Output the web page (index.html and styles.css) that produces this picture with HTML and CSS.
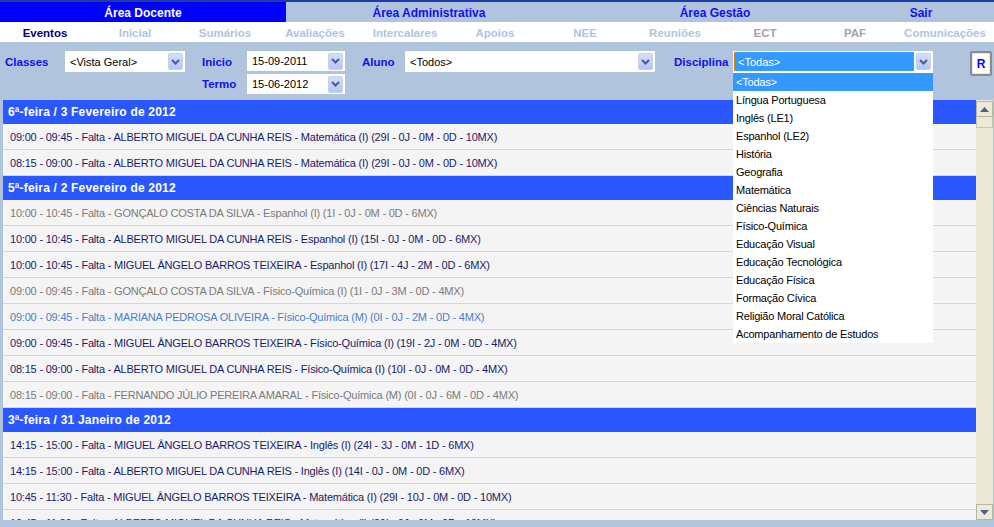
FILE: index.html
```html
<!DOCTYPE html>
<html lang="pt">
<head>
<meta charset="utf-8">
<title>Eventos</title>
<link rel="stylesheet" href="styles.css">
</head>
<body>
<div class="topbar">
  <a class="area active">Área Docente</a>
  <a class="area">Área Administrativa</a>
  <a class="area">Área Gestão</a>
  <a class="area">Sair</a>
  <span></span>
</div>
<div class="subnav">
  <a class="sub current">Eventos</a>
  <a class="sub">Inicial</a>
  <a class="sub">Sumários</a>
  <a class="sub">Avaliações</a>
  <a class="sub">Intercalares</a>
  <a class="sub">Apoios</a>
  <a class="sub">NEE</a>
  <a class="sub">Reuniões</a>
  <a class="sub muted">ECT</a>
  <a class="sub muted">PAF</a>
  <a class="sub">Comunicações</a>
</div>
<div class="filters">
  <label class="lbl">Classes</label>
  <div class="select"><span>&lt;Vista Geral&gt;</span><span class="arrow"><svg width="9" height="6" viewBox="0 0 9 6"><polyline points="1,1 4.5,4.5 8,1" fill="none" stroke="#4b5d88" stroke-width="2"/></svg></span></div>
  <label class="lbl pad17">Inicio</label>
  <div class="select short"><span>15-09-2011</span><span class="arrow"><svg width="9" height="6" viewBox="0 0 9 6"><polyline points="1,1 4.5,4.5 8,1" fill="none" stroke="#4b5d88" stroke-width="2"/></svg></span></div>
  <label class="lbl pad17">Aluno</label>
  <div class="select"><span>&lt;Todos&gt;</span><span class="arrow"><svg width="9" height="6" viewBox="0 0 9 6"><polyline points="1,1 4.5,4.5 8,1" fill="none" stroke="#4b5d88" stroke-width="2"/></svg></span></div>
  <label class="lbl pad19">Disciplina</label>
  <div class="select open">
    <span class="focus">&lt;Todas&gt;</span><span class="arrow"><svg width="9" height="6" viewBox="0 0 9 6"><polyline points="1,1 4.5,4.5 8,1" fill="none" stroke="#4b5d88" stroke-width="2"/></svg></span>
    <ul class="dropdown">
      <li class="sel">&lt;Todas&gt;</li>
      <li>Língua Portuguesa</li>
      <li>Inglês (LE1)</li>
      <li>Espanhol (LE2)</li>
      <li>História</li>
      <li>Geografia</li>
      <li>Matemática</li>
      <li>Ciências Naturais</li>
      <li>Físico-Química</li>
      <li>Educação Visual</li>
      <li>Educação Tecnológica</li>
      <li>Educação Física</li>
      <li>Formação Cívica</li>
      <li>Religião Moral Católica</li>
      <li>Acompanhamento de Estudos</li>
    </ul>
  </div>
  <span></span>
  <button class="rbtn">R</button>
  <label class="lbl pad17 row2 c3">Termo</label>
  <div class="select short row2 c4"><span>15-06-2012</span><span class="arrow"><svg width="9" height="6" viewBox="0 0 9 6"><polyline points="1,1 4.5,4.5 8,1" fill="none" stroke="#4b5d88" stroke-width="2"/></svg></span></div>
</div>
<div class="list">
  <div class="content">
    <div class="day">6ª-feira / 3 Fevereiro de 2012</div>
    <div class="row">09:00 - 09:45 - Falta - ALBERTO MIGUEL DA CUNHA REIS - Matemática (I) (29I - 0J - 0M - 0D - 10MX)</div>
    <div class="row">08:15 - 09:00 - Falta - ALBERTO MIGUEL DA CUNHA REIS - Matemática (I) (29I - 0J - 0M - 0D - 10MX)</div>
    <div class="day">5ª-feira / 2 Fevereiro de 2012</div>
    <div class="row grey">10:00 - 10:45 - Falta - GONÇALO COSTA DA SILVA - Espanhol (I) (1I - 0J - 0M - 0D - 6MX)</div>
    <div class="row">10:00 - 10:45 - Falta - ALBERTO MIGUEL DA CUNHA REIS - Espanhol (I) (15I - 0J - 0M - 0D - 6MX)</div>
    <div class="row">10:00 - 10:45 - Falta - MIGUEL ÂNGELO BARROS TEIXEIRA - Espanhol (I) (17I - 4J - 2M - 0D - 6MX)</div>
    <div class="row grey">09:00 - 09:45 - Falta - GONÇALO COSTA DA SILVA - Físico-Química (I) (1I - 0J - 3M - 0D - 4MX)</div>
    <div class="row light">09:00 - 09:45 - Falta - MARIANA PEDROSA OLIVEIRA - Físico-Química (M) (0I - 0J - 2M - 0D - 4MX)</div>
    <div class="row">09:00 - 09:45 - Falta - MIGUEL ÂNGELO BARROS TEIXEIRA - Físico-Química (I) (19I - 2J - 0M - 0D - 4MX)</div>
    <div class="row">08:15 - 09:00 - Falta - ALBERTO MIGUEL DA CUNHA REIS - Físico-Química (I) (10I - 0J - 0M - 0D - 4MX)</div>
    <div class="row grey">08:15 - 09:00 - Falta - FERNANDO JÚLIO PEREIRA AMARAL - Físico-Química (M) (0I - 0J - 6M - 0D - 4MX)</div>
    <div class="day">3ª-feira / 31 Janeiro de 2012</div>
    <div class="row">14:15 - 15:00 - Falta - MIGUEL ÂNGELO BARROS TEIXEIRA - Inglês (I) (24I - 3J - 0M - 1D - 6MX)</div>
    <div class="row">14:15 - 15:00 - Falta - ALBERTO MIGUEL DA CUNHA REIS - Inglês (I) (14I - 0J - 0M - 0D - 6MX)</div>
    <div class="row">10:45 - 11:30 - Falta - MIGUEL ÂNGELO BARROS TEIXEIRA - Matemática (I) (29I - 10J - 0M - 0D - 10MX)</div>
    <div class="row">10:45 - 11:30 - Falta - ALBERTO MIGUEL DA CUNHA REIS - Matemática (I) (29I - 0J - 0M - 0D - 10MX)</div>
  </div>
  <div class="scrollbar">
    <div class="sbtn"><svg width="9" height="5" viewBox="0 0 9 5"><polygon points="0,5 4.5,0 9,5" fill="#4d6185"/></svg></div>
    <div class="thumb"></div>
    <div class="track"></div>
    <div class="sbtn"><svg width="9" height="5" viewBox="0 0 9 5"><polygon points="0,0 4.5,5 9,0" fill="#4d6185"/></svg></div>
  </div>
</div>
</body>
</html>
```
FILE: styles.css
```css
* { box-sizing: border-box; }
html, body { margin: 0; padding: 0; }
body {
  width: 994px;
  height: 527px;
  overflow: hidden;
  background: #b0c4de;
  font-family: "Liberation Sans", Arial, sans-serif;
}

.topbar {
  display: grid;
  grid-template-columns: 286px 286px 286px 126px 1fr;
  border-top: 2px solid #1e3ca6;
  height: 22px;
}
.area {
  display: flex;
  align-items: center;
  justify-content: center;
  padding-top: 1px;
  font-weight: bold;
  font-size: 12px;
  color: #1010f0;
}
.area.active { background: #0000ff; color: #fff; }

.subnav {
  display: grid;
  grid-template-columns: repeat(11, 90px);
  background: #fff;
  height: 20px;
  padding-top: 2px;
}
.sub {
  display: flex;
  align-items: center;
  justify-content: center;
  font-weight: bold;
  font-size: 11.5px;
  color: #b0c4de;
}
.sub.current { color: #000080; }
.sub.muted { color: #a3a3a3; }

.filters {
  display: grid;
  grid-template-columns: 60px 120px 62px 98px 60px 250px 78px 200px 37px 22px;
  grid-template-rows: 21px 20px;
  row-gap: 2px;
  padding: 9px 0 0 5px;
  height: 58px;
}
.lbl {
  display: flex;
  align-items: center;
  font-weight: bold;
  font-size: 11.5px;
  color: #1010ee;
}
.pad17 { padding-left: 17px; }
.pad19 { padding-left: 19px; }
.row2 { grid-row: 2; }
.c3 { grid-column: 3; }
.c4 { grid-column: 4; }

.select {
  position: relative;
  background: #fff;
  display: flex;
  align-items: center;
  justify-content: space-between;
  font-size: 11px;
  color: #000;
  padding: 0 2px 0 5px;
}
.select.short { height: 20px; }
.select.open { padding-left: 1px; }
.arrow {
  width: 15px;
  height: 17px;
  background: linear-gradient(#d3defc, #b4c6f5);
  border: 1px solid #c2d0f2;
  border-radius: 2px;
  display: flex;
  align-items: center;
  justify-content: center;
}
.focus {
  flex: 1;
  height: 19px;
  margin-right: 2px;
  display: flex;
  align-items: center;
  padding-left: 3px;
  background: #3399ff;
  color: #fff;
  border: 1px dotted #d9832a;
}
.dropdown {
  position: absolute;
  top: 21px;
  left: 0;
  width: 200px;
  margin: 0;
  padding: 1px 0 0;
  list-style: none;
  background: #fff;
  z-index: 5;
}
.dropdown li {
  height: 18px;
  line-height: 18px;
  padding-left: 3px;
  font-size: 11px;
  letter-spacing: -0.2px;
  color: #000;
  white-space: nowrap;
}
.dropdown li.sel { background: #3399ff; color: #fff; }

.rbtn {
  width: 22px;
  height: 25px;
  padding: 0;
  background: #fff;
  border: 2px solid #8c8c8c;
  box-shadow: inset 0 0 0 1px #e6e6e6;
  border-radius: 2px;
  font-family: "Liberation Sans", Arial, sans-serif;
  font-weight: bold;
  font-size: 12px;
  color: #0000ff;
}

.list {
  display: flex;
  height: 420px;
  margin: 0 1px 0 3px;
}
.content {
  flex: 1;
  overflow: hidden;
  background: #f4f4f4;
}
.day {
  height: 24px;
  line-height: 24px;
  padding-left: 5px;
  background: #2a58fe;
  color: #fff;
  font-weight: bold;
  font-size: 12px;
  letter-spacing: 0.2px;
}
.row {
  height: 26px;
  line-height: 25px;
  padding: 1px 0 0 7px;
  border-bottom: 1px solid #d6d6d6;
  font-size: 11px;
  letter-spacing: -0.2px;
  color: #1b1b6b;
  white-space: nowrap;
}
.row.grey { color: #7a7a7a; }
.row.light { color: #4a7fc8; }

.scrollbar {
  width: 17px;
  background: #ece9d8;
  display: flex;
  flex-direction: column;
  padding-top: 1px;
}
.sbtn {
  height: 16px;
  border: 1px solid #b8b4a0;
  background: #ece9d8;
  display: flex;
  align-items: center;
  justify-content: center;
}
.thumb {
  height: 11px;
  border: 1px solid #c8c4b0;
  border-top: none;
  background: #ece9d8;
}
.track { flex: 1; }
```
